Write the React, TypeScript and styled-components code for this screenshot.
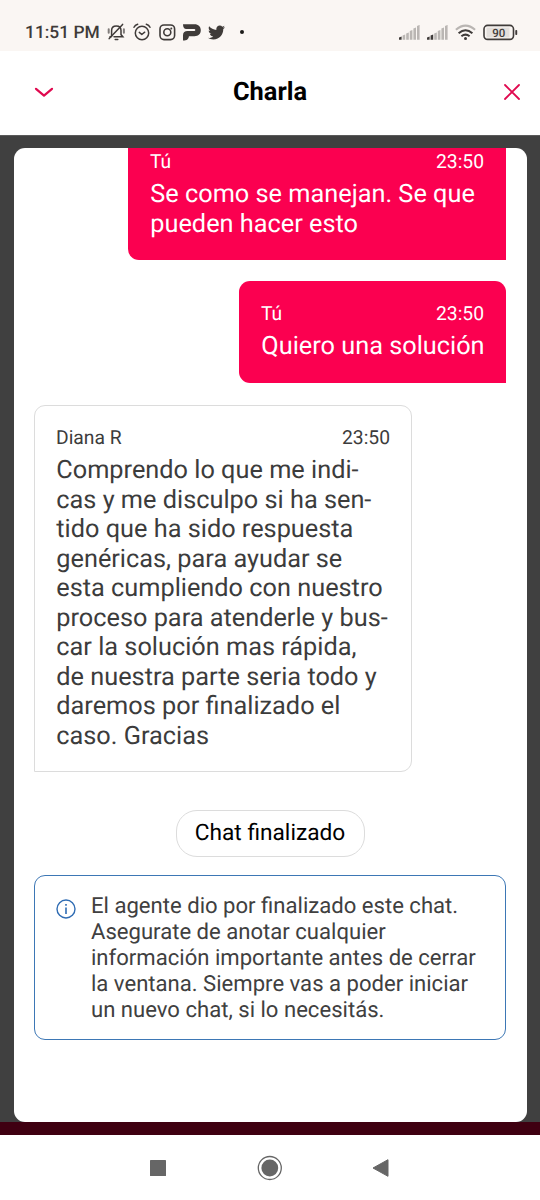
import React from 'react';
import styled, { createGlobalStyle, css } from 'styled-components';
import { FaTwitter } from 'react-icons/fa';

const GlobalStyle = createGlobalStyle`
  * { box-sizing: border-box; }
  body { margin: 0; background: #fff; font-family: Roboto, sans-serif; text-rendering: geometricPrecision; }
  svg { display: block; flex: none; }
`;

const Screen = styled.div`
  width: 540px;
  height: 1200px;
  display: flex;
  flex-direction: column;
  overflow: hidden;
  background: #fff;
`;

const StatusBar = styled.div`
  height: 51px;
  flex: none;
  padding: 12px 22px 0 25px;
  display: flex;
  justify-content: space-between;
  background: #faf6f3;
  color: #3f3b39;
`;

const StatusGroup = styled.div<{ $gap: number }>`
  display: flex;
  align-items: center;
  height: 40px;
  gap: ${(p) => p.$gap}px;
`;

const Clock = styled.span`
  width: 75px;
  padding-top: 1px;
  font-size: 17.4px;
  font-weight: 500;
  white-space: nowrap;
`;

const Dot = styled.span`
  width: 4px;
  height: 4px;
  margin-left: 8px;
  border-radius: 50%;
  background: #1c1a19;
`;

const Header = styled.header`
  height: 84px;
  flex: none;
  padding: 0 18px 2px 34px;
  display: grid;
  grid-template-columns: 20px 1fr 20px;
  align-items: center;
`;

const Title = styled.h1`
  margin: 0 16px 0 0;
  text-align: center;
  font-size: 25.4px;
  line-height: 30px;
  font-weight: 700;
  color: #000;
`;

const IconButton = styled.button`
  border: 0;
  padding: 0;
  background: none;
  color: #e0094f;
`;

const Backdrop = styled.main`
  height: 1000px;
  flex: none;
  padding: 13px 13px 0 14px;
  background: linear-gradient(#404040 987px, #3f0011 987px);
  box-shadow: inset 0 1px 0 #5a5a5a;
`;

const Panel = styled.section`
  height: 974px;
  padding: 0 21px 0 20px;
  display: flex;
  flex-direction: column;
  overflow: hidden;
  border-radius: 11px;
  background: #fff;
`;

const Bubble = styled.article<{ $own?: boolean; $width: number; $cut?: boolean }>`
  flex: none;
  width: ${(p) => p.$width}px;
  ${(p) =>
    p.$own
      ? css`
          align-self: flex-end;
          margin-bottom: 21px;
          padding: 22px 22px 21.5px;
          color: #fff;
          background: #fb0050;
          border-radius: 11px 11px 0 11px;
        `
      : css`
          align-self: flex-start;
          margin-top: 1px;
          padding: 21px 21px 20px;
          color: #3c3c3c;
          border: 1px solid #dcdcdc;
          border-radius: 11px 11px 11px 0;
        `}
  ${(p) => p.$cut && 'margin-top: -19px; padding-bottom: 21px;'}
`;

const Meta = styled.div`
  display: flex;
  justify-content: space-between;
  height: 29px;
  font-size: 19.3px;
  line-height: 21px;
`;

const Message = styled.p`
  margin: 0 0 0 0.3px;
  font-size: 25.3px;
  line-height: 29.5px;
  white-space: pre;
`;

const Chip = styled.div`
  flex: none;
  align-self: center;
  width: 189px;
  height: 47px;
  margin: 38px 0 18px;
  padding-bottom: 2px;
  display: flex;
  align-items: center;
  justify-content: center;
  border: 1px solid #dcdcdc;
  border-radius: 21px;
  font-size: 22.7px;
  color: #000;
`;

const Notice = styled.div`
  flex: none;
  height: 165px;
  padding: 17px 20px 0 21px;
  display: flex;
  gap: 15px;
  border: 1px solid #3d77b5;
  border-radius: 11px;
  color: #404040;
`;

const NoticeIcon = styled.div`
  padding-top: 6px;
  color: #2f6cb3;
`;

const NoticeText = styled.p`
  margin: 0;
  font-size: 22.1px;
  line-height: 26px;
  white-space: pre;
`;

const NavBar = styled.nav`
  height: 65px;
  padding: 0 151px 0 150px;
  display: flex;
  align-items: center;
  justify-content: space-between;
  color: #666;
`;

const BellOff = () => (
  <svg width="19" height="18" viewBox="0 0 19 18" fill="none" stroke="currentColor" strokeWidth="1.5" strokeLinecap="round">
    <path d="M4.6 13.2V7.4C4.6 4.6 6.5 2.9 9.3 2.9s4.7 1.7 4.7 4.5v4.2l1.8 2.1H7" />
    <path d="M3 13.7h1.4M2.2 15.6 15.6 1.4M8.2 16.6h2.6" />
    <path d="M1.7 6.3v3.4M16.9 6.3v3.4" strokeWidth="2" opacity=".65" />
  </svg>
);

const Alarm = () => (
  <svg width="18" height="18" viewBox="0 0 18 18" fill="none" stroke="currentColor" strokeWidth="1.5" strokeLinecap="round" strokeLinejoin="round">
    <circle cx="9" cy="10" r="6.7" />
    <path d="M6.3 9.4 8.8 11.5 11.7 9.2M1 4.2Q2 2 4.7 1.2M17 4.2Q16 2 13.3 1.2" />
  </svg>
);

const Camera = () => (
  <svg width="17" height="17" viewBox="0 0 17 17" fill="none" stroke="currentColor" strokeWidth="1.6">
    <rect x="1" y="1" width="14.6" height="14.6" rx="4" />
    <circle cx="8.3" cy="8.3" r="3.5" />
    <circle cx="12.3" cy="4.4" r="1" fill="currentColor" stroke="none" />
  </svg>
);

const LetterMark = () => (
  <svg width="18" height="17" viewBox="0 0 18 17" fill="currentColor">
    <path d="M0 .3H11.5C15.4.3 17.8 2.8 17.8 6.3S15.4 12.2 11.5 12.2H5.9C5.7 15 4 16.6 0 16.6V11.2C0 8.6 1.8 7.1 4.5 7.1H11.2C12.7 7.1 12.7 5 11.2 5H3.2C1.2 5 0 3.3 0 .3Z" />
  </svg>
);

const Signal = ({ strength }: { strength: number }) => (
  <svg width="21" height="15" viewBox="0 0 21 15" fill="#3f3b39">
    {[3, 5, 7, 9.5, 12, 14.5].map((h, i) => (
      <path key={h} d={`M${i * 3.6} 14.8V${15.6 - h}L${i * 3.6 + 2.6} ${14.4 - h}V14.8Z`} opacity={i < strength ? 1 : 0.34} />
    ))}
  </svg>
);

const Wifi = () => (
  <svg width="21" height="17" viewBox="0 0 21 17" fill="none" stroke="currentColor" strokeWidth="2">
    <path d="M.9 5.8Q10.5-2.6 20.1 5.8" opacity=".35" />
    <path d="M3.6 9.2Q10.5 3.2 17.4 9.2M6.4 12.3Q10.5 9 14.6 12.3" />
    <circle cx="10.5" cy="14.6" r="1.5" fill="currentColor" stroke="none" />
  </svg>
);

const Battery = () => (
  <svg width="35" height="17" viewBox="0 0 35 17">
    <rect x="3.5" y="3.5" width="23" height="10" fill="#e3dfdc" />
    <rect x="1" y="1.4" width="29.5" height="14" rx="3.6" fill="none" stroke="currentColor" strokeWidth="1.6" />
    <rect x="32.3" y="6" width="1.9" height="5" rx=".8" fill="currentColor" />
    <text x="15.8" y="12.5" textAnchor="middle" fontSize="11.5" fontWeight="500" fill="currentColor">90</text>
  </svg>
);

const own = [
  { width: 378, cut: true, text: 'Se como se manejan. Se que\npueden hacer esto' },
  { width: 267, cut: false, text: 'Quiero una solución' },
];

const agentText = [
  'Comprendo lo que me indi-',
  'cas y me disculpo si ha sen-',
  'tido que ha sido respuesta',
  'genéricas, para ayudar se',
  'esta cumpliendo con nuestro',
  'proceso para atenderle y bus-',
  'car la solución mas rápida,',
  'de nuestra parte seria todo y',
  'daremos por finalizado el',
  'caso. Gracias',
].join('\n');

const noticeText = [
  'El agente dio por finalizado este chat.',
  'Asegurate de anotar cualquier',
  'información importante antes de cerrar',
  'la ventana. Siempre vas a poder iniciar',
  'un nuevo chat, si lo necesitás.',
].join('\n');

export default function App() {
  return (
    <Screen>
      <GlobalStyle />
      <StatusBar>
        <StatusGroup $gap={7.2}>
          <Clock>11:51 PM</Clock>
          <BellOff />
          <Alarm />
          <Camera />
          <LetterMark />
          <FaTwitter size={17} />
          <Dot />
        </StatusGroup>
        <StatusGroup $gap={7}>
          <Signal strength={1} />
          <Signal strength={2} />
          <Wifi />
          <Battery />
        </StatusGroup>
      </StatusBar>
      <Header>
        <IconButton aria-label="Minimizar">
          <svg width="20" height="12" viewBox="0 0 20 12" fill="none" stroke="currentColor" strokeWidth="2.2" strokeLinecap="round" strokeLinejoin="round">
            <path d="M2 2.8 10 9.6 18 2.8" />
          </svg>
        </IconButton>
        <Title>Charla</Title>
        <IconButton aria-label="Cerrar">
          <svg width="20" height="18" viewBox="0 0 20 18" fill="none" stroke="currentColor" strokeWidth="1.8" strokeLinecap="round">
            <path d="M3 2 17 16M17 2 3 16" />
          </svg>
        </IconButton>
      </Header>
      <Backdrop>
        <Panel>
          {own.map((m) => (
            <Bubble key={m.text} $own $width={m.width} $cut={m.cut}>
              <Meta>
                <span>Tú</span>
                <span>23:50</span>
              </Meta>
              <Message>{m.text}</Message>
            </Bubble>
          ))}
          <Bubble $width={378}>
            <Meta>
              <span>Diana R</span>
              <span>23:50</span>
            </Meta>
            <Message>{agentText}</Message>
          </Bubble>
          <Chip>Chat finalizado</Chip>
          <Notice>
            <NoticeIcon>
              <svg width="20" height="20" viewBox="0 0 20 20" fill="none" stroke="currentColor" strokeWidth="1.4">
                <circle cx="10" cy="10" r="9" />
                <path d="M10 8.5V15M10 5V6.8" strokeWidth="1.6" />
              </svg>
            </NoticeIcon>
            <NoticeText>{noticeText}</NoticeText>
          </Notice>
        </Panel>
      </Backdrop>
      <NavBar>
        <svg width="16" height="16" viewBox="0 0 16 16" fill="currentColor">
          <rect width="16" height="16" rx=".6" />
        </svg>
        <svg width="26" height="26" viewBox="0 0 26 26" fill="currentColor">
          <circle cx="13.8" cy="13" r="8.4" />
          <circle cx="13.8" cy="13" r="11.5" fill="none" stroke="currentColor" strokeWidth="1.3" />
        </svg>
        <svg width="17" height="18" viewBox="0 0 17 18" fill="currentColor" stroke="currentColor" strokeLinejoin="round">
          <path d="M1 9 16 .7V17.3Z" />
        </svg>
      </NavBar>
    </Screen>
  );
}
